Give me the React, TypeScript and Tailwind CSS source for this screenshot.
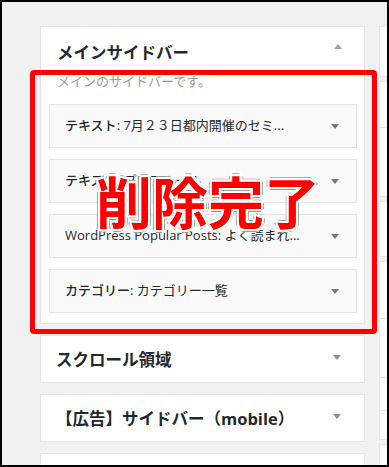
const font = "font-['Open_Sans','Noto_Sans_CJK_JP',sans-serif]"

type Widget = { name: string; title: string }

const widgets: Widget[] = [
  { name: 'テキスト', title: ': 7月２３日都内開催のセミ...' },
  { name: 'テキスト', title: ': プロフィール' },
  { name: 'WordPress Popular Posts', title: ': よく読まれ...' },
  { name: 'カテゴリー', title: ': カテゴリー一覧' },
]

function ArrowDown({ className = '' }: { className?: string }) {
  return (
    <svg width="8" height="5" viewBox="0 0 8 5" className={className}>
      <path d="M0 0 L8 0 L4 5 Z" fill="currentColor" />
    </svg>
  )
}

function ArrowUp({ className = '' }: { className?: string }) {
  return (
    <svg width="8" height="5" viewBox="0 0 8 5" className={className}>
      <path d="M0 5 L8 5 L4 0 Z" fill="currentColor" />
    </svg>
  )
}

function WidgetRow({ widget }: { widget: Widget }) {
  return (
    <div className="flex h-[44px] items-center justify-between border border-[#e5e5e5] bg-[#f9f9f9] pl-[15px] pr-[17px]">
      <span className="text-[13px] text-[#23282d]">
        <span className="font-medium">{widget.name}</span>
        {widget.title}
      </span>
      <ArrowDown className="text-[#72777c]" />
    </div>
  )
}

function SidebarCard({ title }: { title: string }) {
  return (
    <div className="flex h-[48px] items-start justify-between border border-[#e5e5e5] bg-white pl-[15px] pr-[23px]">
      <h3 className="mt-[12px] text-[16.5px] leading-[24px] font-bold text-[#23282d]">{title}</h3>
      <ArrowDown className="mt-[19px] text-[#8c8f94]" />
    </div>
  )
}

export default function App() {
  return (
    <div className={`relative h-[467px] w-[389px] overflow-hidden border-2 border-black bg-[#f1f1f1] ${font}`}>
      <div className="flex pl-[38px] pt-[24px]">
        {/* left column */}
        <div className="flex w-[325px] shrink-0 flex-col gap-[11px]">
          <div className="border border-[#e5e5e5] bg-white pb-[10px]">
            <div className="flex items-start justify-between pl-[16px] pr-[22px] pt-[14px]">
              <h3 className="text-[16.5px] leading-[24px] font-bold text-[#23282d]">メインサイドバー</h3>
              <ArrowUp className="mt-[3px] text-[#a0a5aa]" />
            </div>
            <p className="mt-[7px] pl-[16px] text-[13px] leading-[18px] text-[#999999]">メインのサイドバーです。</p>
            <div className="mt-[14px] flex flex-col gap-[11px] pl-[8px] pr-[7px]">
              {widgets.map((w, i) => (
                <WidgetRow key={i} widget={w} />
              ))}
            </div>
          </div>
          <SidebarCard title="スクロール領域" />
          <SidebarCard title="【広告】サイドバー（mobile）" />
          <div className="h-[48px] border border-[#e5e5e5] bg-white" />
        </div>

        {/* right column, cut off */}
        <div className="ml-[14px] flex w-[60px] shrink-0 flex-col gap-[4px]">
          <div className="h-[51px] border border-[#e5e5e5] bg-white" />
          <div className="h-[116px] border border-[#e5e5e5] bg-white">
            <div className="mt-[45px] border-t border-[#e5e5e5]" />
          </div>
          <div className="h-[56px] border border-[#e5e5e5] bg-white" />
          <div className="h-[179px] border border-[#e5e5e5] bg-white">
            <div className="mt-[56px] border-t border-[#e5e5e5]" />
            <div className="mt-[58px] border-t border-[#e5e5e5]" />
            <div className="mt-[32px] border-t border-[#e5e5e5]" />
          </div>
          <div className="h-[40px] border border-[#e5e5e5] bg-white" />
        </div>
      </div>

      {/* red highlight frame */}
      <div className="pointer-events-none absolute left-[28px] top-[68px] h-[264px] w-[347px] rounded-[4px] border-[5px] border-[#ff0000]" />

      {/* overlay caption */}
      <div
        className="pointer-events-none absolute left-[94px] top-[170px] font-['Noto_Sans_CJK_JP',sans-serif] text-[56px] leading-none font-bold text-[#ff0000] [text-shadow:2px_0_0_#fff,-2px_0_0_#fff,0_2px_0_#fff,0_-2px_0_#fff,2px_2px_0_#fff,-2px_-2px_0_#fff,2px_-2px_0_#fff,-2px_2px_0_#fff,3px_0_0_#999,-3px_0_0_#999,0_3px_0_#999,0_-3px_0_#999]"
      >
        削除完了
      </div>
    </div>
  )
}
